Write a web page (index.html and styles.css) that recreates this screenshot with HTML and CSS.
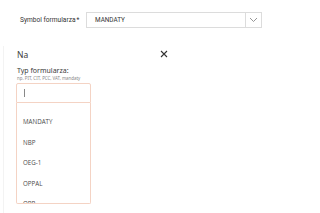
FILE: index.html
```html
<!DOCTYPE html>
<html>
<head>
<meta charset="utf-8">
<link rel="stylesheet" href="styles.css">
</head>
<body>
<div class="top-row">
  <span class="top-label">Symbol formularza<span class="req">*</span></span>
  <div class="select">
    <span class="select-value">MANDATY</span>
    <span class="select-arrow">
      <svg width="9" height="6" viewBox="0 0 9 6"><path d="M1 1 L4.5 4.5 L8 1" fill="none" stroke="#8a8a8a" stroke-width="0.9"/></svg>
    </span>
  </div>
</div>
<div class="panel">
  <div class="panel-head">
    <span class="panel-title">Na</span>
    <svg class="close" width="8" height="8" viewBox="0 0 8 8"><path d="M1 1 L7 7 M7 1 L1 7" stroke="#333" stroke-width="1.1"/></svg>
  </div>
  <div class="field-label">Typ formularza:</div>
  <div class="field-hint">np. PIT, CIT, PCC, VAT, mandaty</div>
  <div class="combo">
    <div class="combo-input"><span class="caret"></span></div>
    <ul class="combo-list">
      <li>MANDATY</li>
      <li>NBP</li>
      <li>OEG-1</li>
      <li>OPPAL</li>
      <li>OPP</li>
    </ul>
  </div>
</div>
</body>
</html>
```
FILE: styles.css
```css
html, body {
  margin: 0;
  padding: 0;
  background: #fff;
  width: 320px;
  height: 213px;
  overflow: hidden;
  font-family: "Noto Sans", "Liberation Sans", sans-serif;
  color: #333;
}
.top-row {
  display: flex;
  align-items: center;
  padding-top: 12px;
  padding-left: 20px;
  height: 16px;
}
.top-label {
  font-family: Roboto, "Liberation Sans", sans-serif;
  font-size: 6.6px;
  color: #333;
  width: 66px;
}
.req { margin-left: 1px; }
.select {
  display: flex;
  width: 176px;
  height: 16px;
  box-sizing: border-box;
  border: 1px solid #dcdcdc;
  align-items: stretch;
}
.select-value {
  flex: 1;
  font-family: Roboto, "Liberation Sans", sans-serif;
  font-size: 6.4px;
  color: #333;
  padding-left: 8px;
  display: flex;
  align-items: center;
}
.select-arrow {
  width: 15px;
  border-left: 1px solid #dcdcdc;
  display: flex;
  align-items: center;
  justify-content: center;
}
.panel {
  margin-top: 18px;
  margin-left: 3px;
  border-left: 1px solid #f3f3f3;
  padding-left: 12px;
  padding-top: 2px;
  height: 170px;
}
.panel-head {
  display: flex;
  align-items: center;
  width: 152px;
  justify-content: space-between;
  height: 12px;
}
.panel-title {
  font-size: 8.5px;
  color: #3a3a3a;
  padding-left: 1px;
}
.field-label {
  margin-top: 6px;
  font-size: 7px;
  color: #3a3a3a;
  padding-left: 1px;
  line-height: 9px;
}
.field-hint {
  font-size: 4.4px;
  color: #888;
  padding-left: 1px;
  line-height: 6px;
}
.combo {
  margin-top: 2px;
  width: 75px;
}
.combo-input {
  height: 20px;
  box-sizing: border-box;
  border: 1px solid #f4d3c4;
  border-radius: 2px 2px 0 0;
  display: flex;
  align-items: center;
  padding-left: 7px;
}
.caret {
  width: 1px;
  height: 8px;
  background: #888;
}
.combo-list {
  list-style: none;
  margin: 0;
  padding: 0;
  height: 101px;
  box-sizing: border-box;
  border: 1px solid #f4d3c4;
  border-top: none;
  border-radius: 0 0 2px 2px;
  overflow: hidden;
  padding-top: 9px;
}
.combo-list li {
  font-family: "Open Sans", "Liberation Sans", sans-serif;
  font-size: 6.2px;
  color: #4a4a4a;
  height: 20.5px;
  line-height: 20.5px;
  padding-left: 6px;
}
```
